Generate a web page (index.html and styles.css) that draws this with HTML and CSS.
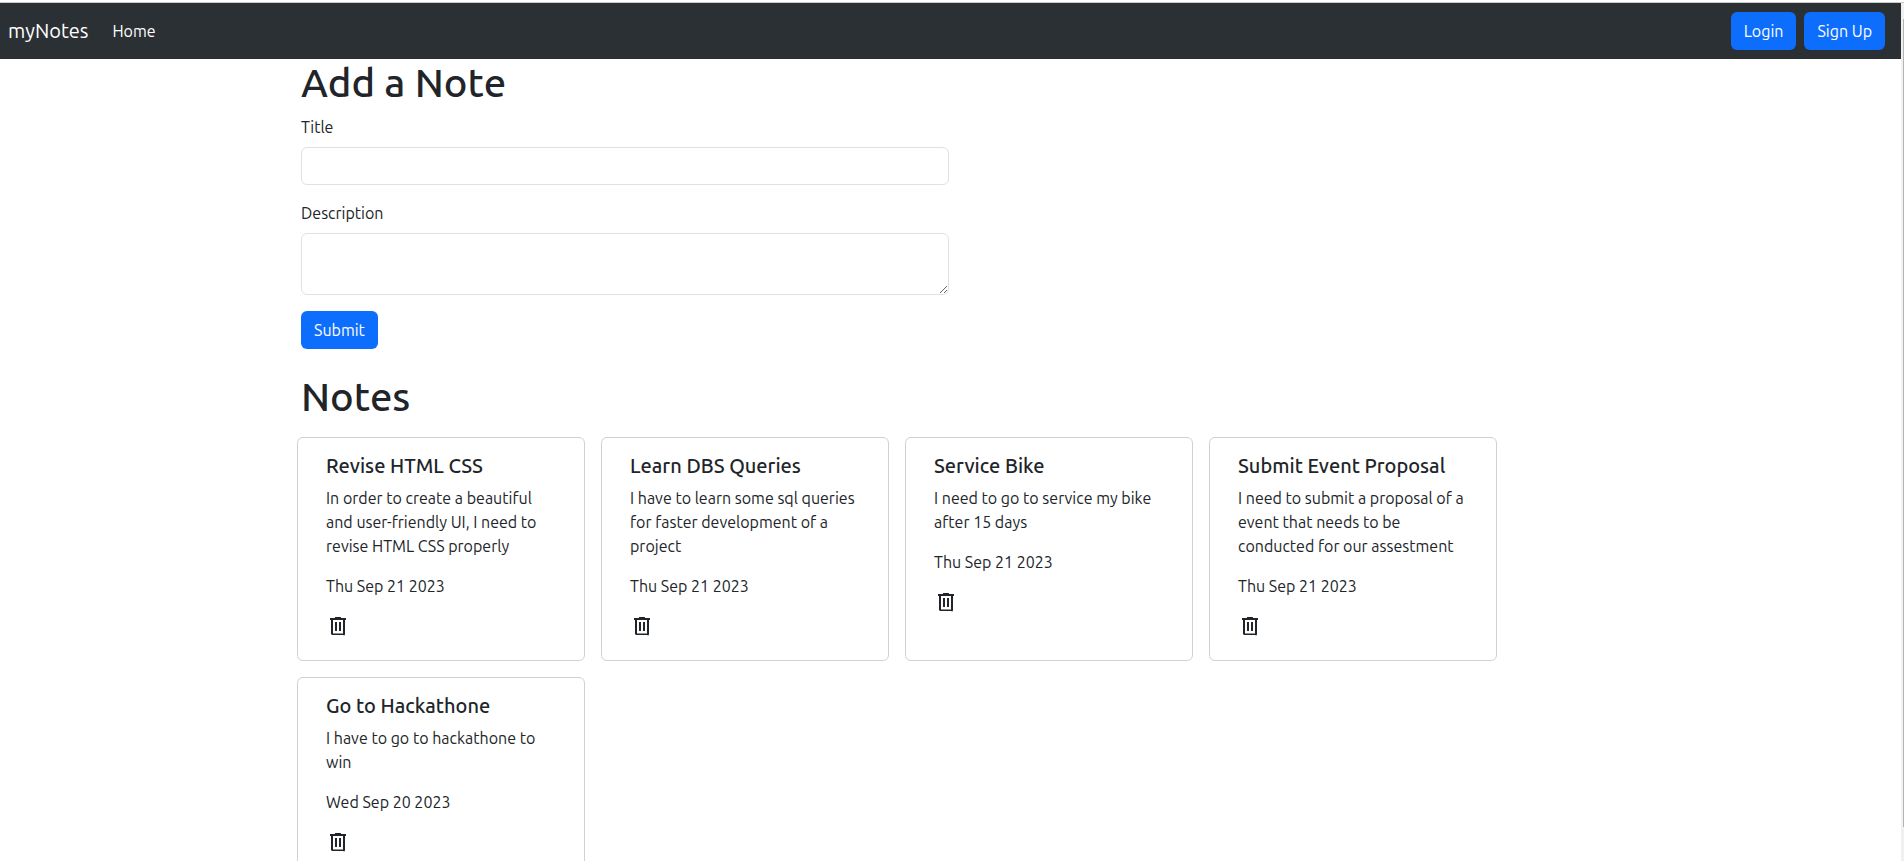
FILE: index.html
```html
<!DOCTYPE html>
<html lang="en">
<head>
<meta charset="utf-8">
<title>myNotes</title>
<link rel="stylesheet" href="styles.css">
</head>
<body>
<svg class="sprite" aria-hidden="true">
  <symbol id="trash" viewBox="0 0 24 24"><path d="M7 21q-.825 0-1.412-.587Q5 20.825 5 20V6H4V4h5V3h6v1h5v2h-1v14q0 .825-.587 1.413Q17.825 21 17 21ZM17 6H7v13.500h10V6ZM9 17h2V8H9v9Zm4 0h2V8h-2v9Z"/></symbol>
</svg>
<div class="viewport">
  <div class="page">
    <nav class="navbar">
      <a class="brand" href="#">myNotes</a>
      <a class="nav-link" href="#">Home</a>
      <div class="nav-actions">
        <button class="btn" type="button">Login</button>
        <button class="btn" type="button">Sign Up</button>
      </div>
    </nav>
    <main class="container">
      <h1>Add a Note</h1>
      <form class="note-form">
        <div class="field">
          <label for="title">Title</label>
          <input class="control" id="title" type="text">
        </div>
        <div class="field">
          <label for="description">Description</label>
          <textarea class="control" id="description" rows="2"></textarea>
        </div>
        <button class="btn" type="submit">Submit</button>
      </form>
      <h1 class="notes-heading">Notes</h1>
      <section class="notes">
        <article class="card">
          <h2>Revise HTML CSS</h2>
          <p>In order to create a beautiful and user-friendly UI, I need to revise HTML CSS properly</p>
          <p>Thu Sep 21 2023</p>
          <button class="delete" type="button" aria-label="Delete note"><svg><use href="#trash"/></svg></button>
        </article>
        <article class="card">
          <h2>Learn DBS Queries</h2>
          <p>I have to learn some sql queries for faster development of a project</p>
          <p>Thu Sep 21 2023</p>
          <button class="delete" type="button" aria-label="Delete note"><svg><use href="#trash"/></svg></button>
        </article>
        <article class="card">
          <h2>Service Bike</h2>
          <p>I need to go to service my bike after 15 days</p>
          <p>Thu Sep 21 2023</p>
          <button class="delete" type="button" aria-label="Delete note"><svg><use href="#trash"/></svg></button>
        </article>
        <article class="card">
          <h2>Submit Event Proposal</h2>
          <p>I need to submit a proposal of a event that needs to be conducted for our assestment</p>
          <p>Thu Sep 21 2023</p>
          <button class="delete" type="button" aria-label="Delete note"><svg><use href="#trash"/></svg></button>
        </article>
        <article class="card">
          <h2>Go to Hackathone</h2>
          <p>I have to go to hackathone to win</p>
          <p>Wed Sep 20 2023</p>
          <button class="delete" type="button" aria-label="Delete note"><svg><use href="#trash"/></svg></button>
        </article>
      </section>
    </main>
  </div>
  <div class="scroll-track"><div class="scroll-thumb"></div></div>
</div>
</body>
</html>
```
FILE: styles.css
```css
* { box-sizing: border-box; }

body {
  margin: 0;
  font-family: Ubuntu, "Noto Sans", sans-serif;
  font-size: 16px;
  line-height: 24px;
  color: #212529;
  background: #fff;
}

h1, h2, p { margin: 0; }

.sprite {
  display: none;
}

.viewport {
  display: flex;
  height: 100vh;
  padding-top: 2px;
  overflow: hidden;
}

.page {
  flex: 1;
  border-top: 1px solid #ccc;
}

.scroll-track {
  width: 3px;
  padding-top: 16px;
  border-top: 1px solid #ccc;
  background: #f0f0f0;
}

.scroll-thumb {
  width: 1px;
  height: 96%;
  margin-left: auto;
  background: #b4b4b4;
}

.navbar {
  display: flex;
  align-items: center;
  min-height: 56px;
  padding: 0 16px 0 8px;
  background: #2b3035;
}

.brand, .nav-link {
  color: #fff;
  text-decoration: none;
}

.brand {
  margin-right: 24px;
  font-size: 20px;
}

.nav-actions {
  display: flex;
  gap: 8px;
  margin-left: auto;
}

.btn {
  height: 38px;
  padding: 0 13px;
  border: 0;
  border-radius: 6px;
  background: #0d6efd;
  color: #fff;
  font: inherit;
}

.container {
  max-width: 1299px;
  margin: 0 auto;
}

h1 {
  font-size: 40px;
  font-weight: 500;
  line-height: 48px;
}

.note-form {
  width: 50%;
  padding: 8px 2px 0 0;
}

.field {
  display: grid;
  gap: 8px;
  margin-bottom: 16px;
}

.control {
  width: 100%;
  height: 38px;
  padding: 6px 12px;
  border: 1px solid #dee2e6;
  border-radius: 6px;
  background: #fff;
  font: inherit;
}

textarea.control {
  height: 62px;
  resize: vertical;
}

.notes-heading {
  margin: 24px 0 16px;
}

.notes {
  display: grid;
  grid-template-columns: repeat(auto-fill, 288px);
  gap: 16px;
  margin: 0 -4px;
}

.card {
  padding: 16px 28px;
  border: 1px solid #d0d1d2;
  border-radius: 6px;
}

.card h2 {
  margin-bottom: 8px;
  font-size: 20px;
  font-weight: 500;
  line-height: 24px;
}

.card p {
  margin-bottom: 16px;
}

.delete {
  display: flex;
  align-items: flex-start;
  height: 30px;
  padding: 0;
  border: 0;
  background: none;
  color: #212529;
}

.delete svg {
  width: 24px;
  height: 24px;
  fill: currentColor;
}
```
